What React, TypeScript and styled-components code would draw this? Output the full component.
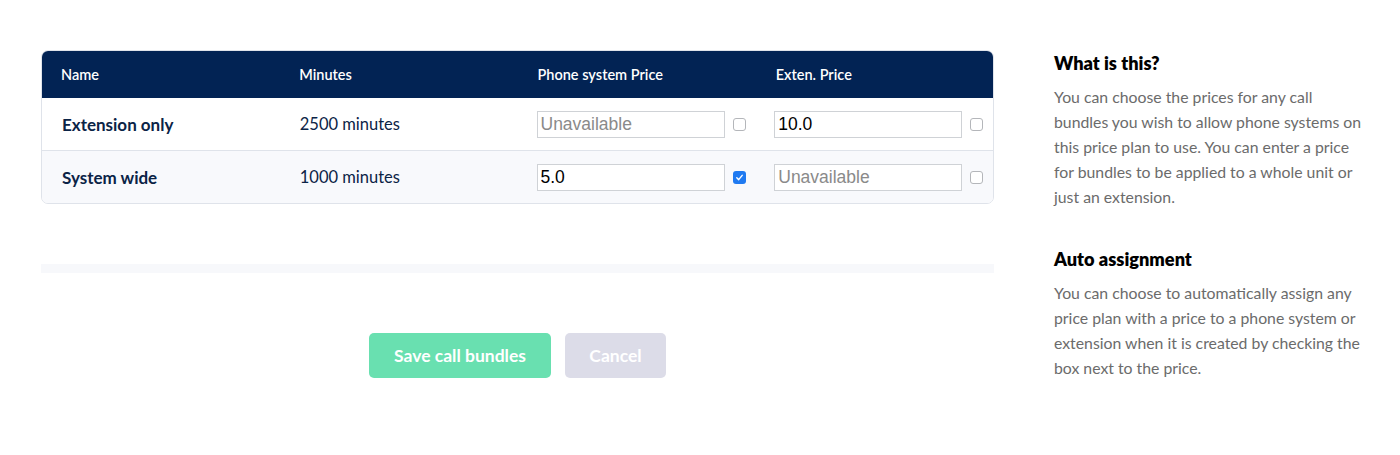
import React from "react";
import styled, { createGlobalStyle } from "styled-components";

const GlobalStyle = createGlobalStyle`
  body {
    margin: 0;
    background: #ffffff;
    font-family: Lato, "Noto Sans", sans-serif;
  }
`;

interface IBundle {
  name: string;
  minutes: number;
  systemPrice: string;
  systemAuto: boolean;
  extenPrice: string;
  extenAuto: boolean;
}

const bundles: IBundle[] = [
  { name: "Extension only", minutes: 2500, systemPrice: "", systemAuto: false, extenPrice: "10.0", extenAuto: false },
  { name: "System wide", minutes: 1000, systemPrice: "5.0", systemAuto: true, extenPrice: "", extenAuto: false },
];

const CheckBox = ({ checked }: { checked: boolean }) => (
  <Box checked={checked}>
    {checked && (
      <svg width="9" height="9" viewBox="0 0 10 10">
        <path d="M2 5.3 L4.1 7.4 L8 2.6" fill="none" stroke="#fff" strokeWidth="1.6" strokeLinecap="round" strokeLinejoin="round" />
      </svg>
    )}
  </Box>
);

const PriceCell = ({ value, checked }: { value: string; checked: boolean }) => (
  <PriceWrap>
    <PriceInput defaultValue={value} placeholder="Unavailable" />
    <CheckBox checked={checked} />
  </PriceWrap>
);

export default function App() {
  return (
    <Page>
      <GlobalStyle />
      <Main>
        <Table>
          <HeadRow>
            <HeadCell>Name</HeadCell>
            <HeadCell>Minutes</HeadCell>
            <HeadCell>Phone system Price</HeadCell>
            <HeadCell>Exten. Price</HeadCell>
          </HeadRow>
          {bundles.map((b, i) => (
            <Row key={b.name} striped={i % 2 === 1}>
              <NameCell>{b.name}</NameCell>
              <Cell>{b.minutes} minutes</Cell>
              <Cell>
                <PriceCell value={b.systemPrice} checked={b.systemAuto} />
              </Cell>
              <Cell>
                <PriceCell value={b.extenPrice} checked={b.extenAuto} />
              </Cell>
            </Row>
          ))}
        </Table>
        <Strip />
        <Actions>
          <SaveButton>Save call bundles</SaveButton>
          <CancelButton>Cancel</CancelButton>
        </Actions>
      </Main>
      <Side>
        <SideTitle>What is this?</SideTitle>
        <SideText>
          You can choose the prices for any call bundles you wish to allow phone systems on this price plan to use. You
          can enter a price for bundles to be applied to a whole unit or just an extension.
        </SideText>
        <SideTitle>Auto assignment</SideTitle>
        <SideText>
          You can choose to automatically assign any price plan with a price to a phone system or extension when it is
          created by checking the box next to the price.
        </SideText>
      </Side>
    </Page>
  );
}

const Page = styled.div`
  display: flex;
  gap: 60px;
  padding: 50px 0 0 41px;
  height: 455px;
  box-sizing: border-box;
`;

const Main = styled.div`
  width: 953px;
  display: flex;
  flex-direction: column;
`;

const Table = styled.div`
  border: 1px solid #dfe3ea;
  border-radius: 7px;
  overflow: hidden;
`;

const HeadRow = styled.div`
  display: grid;
  grid-template-columns: repeat(4, 1fr);
  height: 48px;
  align-items: center;
  background: #022354;
  margin: -1px -1px 0;
`;

const HeadCell = styled.div`
  padding-left: 20px;
  color: #ffffff;
  font-size: 14.5px;
  font-weight: 600;
`;

const Row = styled.div<{ striped: boolean }>`
  display: grid;
  grid-template-columns: repeat(4, 1fr);
  height: 52px;
  align-items: center;
  background: ${(p) => (p.striped ? "#f8f9fc" : "#ffffff")};
  & + & {
    border-top: 1px solid #dfe3ea;
  }
`;

const Cell = styled.div`
  padding-left: 20px;
  color: #0b2346;
  font-size: 16.5px;
`;

const NameCell = styled(Cell)`
  font-size: 17px;
  font-weight: 700;
`;

const PriceWrap = styled.div`
  display: flex;
  align-items: center;
  gap: 8px;
  margin-left: -1px;
`;

const PriceInput = styled.input`
  width: 188px;
  height: 27px;
  box-sizing: border-box;
  border: 1px solid #cfd2d6;
  padding: 0 3px;
  font-family: "Liberation Sans", Arial, sans-serif;
  font-size: 17.5px;
  color: #000;
  outline: none;
  &::placeholder {
    color: #8a8a8a;
  }
`;

const Box = styled.span<{ checked: boolean }>`
  width: 13px;
  height: 13px;
  box-sizing: border-box;
  border-radius: 3px;
  display: inline-flex;
  align-items: center;
  justify-content: center;
  border: ${(p) => (p.checked ? "none" : "1px solid #b4b6ba")};
  background: ${(p) => (p.checked ? "#1f7af1" : "#ffffff")};
`;

const Strip = styled.div`
  height: 9px;
  margin-top: 60px;
  background: #f7f8fb;
`;

const Actions = styled.div`
  display: flex;
  justify-content: center;
  gap: 14px;
  margin-top: 60px;
`;

const Button = styled.button`
  height: 45px;
  border: none;
  border-radius: 5px;
  font-family: Lato, "Noto Sans", sans-serif;
  font-size: 17.5px;
  font-weight: 700;
  color: #ffffff;
`;

const SaveButton = styled(Button)`
  width: 182px;
  background: #69e0b0;
`;

const CancelButton = styled(Button)`
  width: 101px;
  background: #dcdce8;
`;

const Side = styled.div`
  width: 314px;
  padding-top: 2px;
`;

const SideTitle = styled.h3`
  margin: 0 0 10px;
  font-size: 18.2px;
  font-weight: 800;
  color: #000;
  line-height: 22px;
`;

const SideText = styled.p`
  margin: 0 0 39px;
  font-size: 15.8px;
  line-height: 25px;
  color: #6b6b6b;
`;
